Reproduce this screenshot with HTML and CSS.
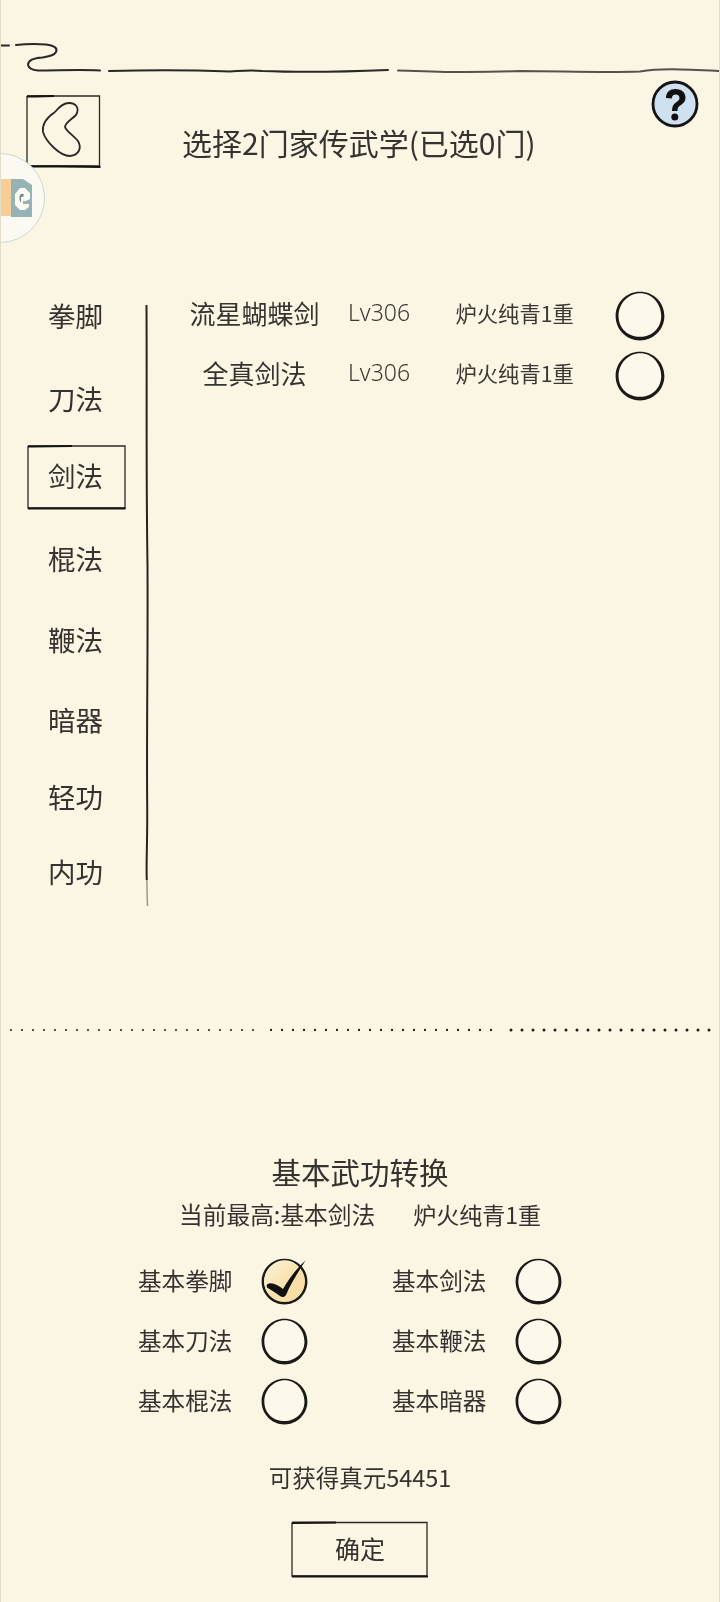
FILE: index.html
```html
<!DOCTYPE html>
<html lang="zh">
<head>
<meta charset="utf-8">
<title>选择家传武学</title>
<link rel="stylesheet" href="styles.css">
</head>
<body>
<svg class="defs" width="0" height="0" aria-hidden="true">
  <defs>
    <linearGradient id="gold" x1="0" y1="0" x2="1" y2="1">
      <stop offset="0" stop-color="#fcf3dc"/>
      <stop offset=".55" stop-color="#f9e0aa"/>
      <stop offset="1" stop-color="#f8dba0"/>
    </linearGradient>
    <symbol id="ring" viewBox="0 0 48 48">
      <circle cx="24" cy="24" r="22.500" fill="#fcf8ec"/>
      <path fill="#1c1a17" fill-rule="evenodd" d="M24 .8C37 .8 47.400 11 47.400 24S37 47.400 24 47.400.6 37 .6 24 11 .8 24 .8ZM24.200 2.200C12.800 2.200 3.400 12 3.400 24S12.500 44 24 44 44.400 35.500 44.400 24 35.600 2.200 24.200 2.200Z"/>
    </symbol>
  </defs>
</svg>
<div class="page">
  <svg class="top-rule" viewBox="0 0 720 40" aria-hidden="true">
    <path class="ink" d="M0 5.500H9"/>
    <path class="ink" d="M16 5C26 4 38 4 46 4.500C54 5.500 58 8 56 12C54 16 48 16.500 42 17.500C34 18 28 20 28 25C29 29 33 30 38 30.500C58 30.500 80 29.500 100 30.500"/>
    <path class="ink" d="M109 31C150 30 190 30 230 31.500C240 31 250 29.500 262 31C300 32.500 340 32 388 30"/>
    <path class="ink ink-soft" d="M398 30.500C440 32 470 33 520 31C560 31 600 33 640 31.500C660 28 680 29 720 31"/>
  </svg>

  <header class="head">
    <button class="back" type="button" aria-label="返回">
      <svg viewBox="0 0 76 74" aria-hidden="true">
        <path class="box-thin" d="M1 2V72H73.500V2H1"/>
        <path class="box-bold" d="M1 2.500C10 2.300 18 2.200 28 2M1 72.500C25 72.500 50 72 74.500 73"/>
        <path class="back-glyph" d="M29 18C20 24 16 31 17 38C20 48 34 62 44 62C53 61 56 54 52 47C47 41 40 37 39 33C39 29 45 26 50 21C54 14 50 9 43 9C37 9 33 13 29 18"/>
      </svg>
    </button>
    <h1 class="title">选择2门家传武学(已选0门)</h1>
    <svg class="help" viewBox="0 0 48 48" role="img" aria-label="帮助">
      <circle cx="24" cy="24" r="22" fill="#cfe1ee" stroke="#141414" stroke-width="2.800"/>
      <path d="M15 18C15 12 19 9 24.500 9C31 9 34.500 13 34.500 17.500C34.500 22 31.500 24 28.500 26C26.800 27.200 26.500 28.500 26.500 31H21C21 27 22 24.500 25 22.500C27.500 20.800 28.500 19.800 28.500 18C28.500 15.800 27 14.500 24.800 14.500C22.300 14.500 21 16 20.800 18.500Z" fill="#111"/>
      <circle cx="23.800" cy="37" r="3.500" fill="#111"/>
    </svg>
  </header>

  <aside class="bubble" aria-hidden="true">
    <svg class="bubble-logo" viewBox="0 0 32 40">
      <rect x="0" y="0" width="11" height="37" fill="#f6cf96"/>
      <path d="M10 0H22L31 6V38H10Z" fill="#93b3b5"/>
      <path d="M14 15L19 9H24L29 14V20L25 22H22V25H28V28L24 31H19L14 26Z" fill="#fbf9f2"/>
      <path d="M20 15H23L22 18H20V24L18.500 21V17Z" fill="#6f8f92"/>
    </svg>
  </aside>

  <main class="picker">
    <nav class="tabs">
      <div class="tab"><span>拳脚</span></div>
      <div class="tab"><span>刀法</span></div>
      <div class="tab tab-on">
        <svg class="tab-box" viewBox="0 0 100 66" preserveAspectRatio="none" aria-hidden="true">
          <path class="box-thin" d="M1 2V64H98V2H1"/>
          <path class="box-bold" d="M1 2.500C15 2.200 30 2.100 45 2M1 64.500H98.500"/>
        </svg>
        <span>剑法</span>
      </div>
      <div class="tab"><span>棍法</span></div>
      <div class="tab"><span>鞭法</span></div>
      <div class="tab"><span>暗器</span></div>
      <div class="tab"><span>轻功</span></div>
      <div class="tab"><span>内功</span></div>
    </nav>
    <svg class="divider" viewBox="0 0 8 602" aria-hidden="true">
      <path class="div-line" d="M3.500 0C4 100 3 160 4.500 260C5 360 3.500 420 4.200 500C4.500 540 3 560 3.800 575"/>
      <path class="div-tail" d="M3.800 575C4 585 4.200 592 4.500 601"/>
    </svg>
    <section class="skills">
      <div class="skill">
        <span class="skill-name">流星蝴蝶剑</span>
        <span class="skill-lv">Lv306</span>
        <span class="skill-rank">炉火纯青1重</span>
        <svg class="ring-lg"><use href="#ring"/></svg>
      </div>
      <div class="skill">
        <span class="skill-name">全真剑法</span>
        <span class="skill-lv">Lv306</span>
        <span class="skill-rank">炉火纯青1重</span>
        <svg class="ring-lg"><use href="#ring"/></svg>
      </div>
    </section>
  </main>

  <svg class="dots" viewBox="0 0 720 6" aria-hidden="true">
    <path class="dot-a" d="M11 3H260"/>
    <path class="dot-b" d="M271 3H500"/>
    <path class="dot-c" d="M511 3H710"/>
  </svg>

  <section class="convert">
    <h2 class="convert-title">基本武功转换</h2>
    <p class="convert-sub"><span>当前最高:基本剑法</span><span class="convert-rank">炉火纯青1重</span></p>
    <div class="options">
      <div class="option">
        <span class="option-label">基本拳脚</span>
        <span class="check">
          <svg class="ring-md"><use href="#ring"/></svg>
          <svg class="check-mark" viewBox="0 0 60 60" aria-hidden="true">
            <circle cx="26.500" cy="31.500" r="20.500" fill="url(#gold)"/>
            <path fill="#111" d="M9.500 34C14 32 20 35 25 39C31 29 38 19 47.500 10.500C41 21 33 33 28 45C26 47.500 24 47.500 22 46C18 43 13 40 9 37.500C8.500 36 8.500 35 9.500 34Z"/>
          </svg>
        </span>
      </div>
      <div class="option"><span class="option-label">基本剑法</span><svg class="ring-md"><use href="#ring"/></svg></div>
      <div class="option"><span class="option-label">基本刀法</span><svg class="ring-md"><use href="#ring"/></svg></div>
      <div class="option"><span class="option-label">基本鞭法</span><svg class="ring-md"><use href="#ring"/></svg></div>
      <div class="option"><span class="option-label">基本棍法</span><svg class="ring-md"><use href="#ring"/></svg></div>
      <div class="option"><span class="option-label">基本暗器</span><svg class="ring-md"><use href="#ring"/></svg></div>
    </div>
    <p class="gain">可获得真元54451</p>
    <button class="confirm" type="button">
      <svg class="confirm-box" viewBox="0 0 138 57" preserveAspectRatio="none" aria-hidden="true">
        <path class="box-thin" d="M1 1.500V55H136V1.500H1"/>
        <path class="box-bold" d="M1 1.800C15 1.600 30 1.500 45 1.500M1 55.500H137"/>
      </svg>
      <span>确定</span>
    </button>
  </section>
</div>
</body>
</html>
```

FILE: styles.css
```css
* { box-sizing: border-box; }
html, body { margin: 0; padding: 0; }
body {
  width: 720px;
  height: 1602px;
  overflow: hidden;
  background: #fbf5e4;
  color: #35332f;
  font-family: "Noto Sans CJK SC", "Noto Sans", sans-serif;
  font-weight: 400;
}
.defs { position: absolute; }
.page {
  position: relative;
  width: 720px;
  height: 1602px;
  border-left: 1px solid #e4dcc6;
  border-right: 1px solid #e4dcc6;
  overflow: hidden;
  filter: blur(.35px);
}
svg { display: block; overflow: visible; }
.ink { fill: none; stroke: #2a2825; stroke-width: 2; stroke-linecap: round; stroke-linejoin: round; }
.ink-soft { stroke: #55524c; }
.box-thin { fill: none; stroke: #2a2825; stroke-width: 1.300; }
.box-bold { fill: none; stroke: #151412; stroke-width: 2.200; }

.top-rule { width: 720px; height: 40px; margin: 40px 0 0 -1px; }

.head {
  display: grid;
  grid-template-columns: 99px 1fr 48px;
  align-items: start;
  height: 93px;
  padding: 0 20px 0 25px;
}
.back {
  width: 76px;
  height: 74px;
  margin-top: 14px;
  padding: 0;
  border: 0;
  background: none;
}
.back svg { width: 76px; height: 74px; }
.back-glyph { fill: none; stroke: #2a2825; stroke-width: 1.800; stroke-linejoin: round; }
.title {
  margin: 42px 0 0;
  padding-left: 57px;
  font-size: 30px;
  line-height: 40px;
  font-weight: 400;
  white-space: nowrap;
}
.help { width: 48px; height: 48px; }

.bubble {
  position: absolute;
  left: -46px;
  top: 153px;
  width: 90px;
  height: 90px;
  border-radius: 50%;
  background: #fbf9f2;
  border: 1.500px solid #c9d8d2;
}
.bubble-logo {
  position: absolute;
  left: 45px;
  top: 25px;
  width: 32px;
  height: 40px;
}

.picker {
  display: flex;
  align-items: flex-start;
  height: 744px;
  margin-top: 111px;
}
.tabs { width: 142px; padding-left: 26px; flex: none; }
.tab {
  position: relative;
  display: flex;
  align-items: center;
  justify-content: center;
  width: 100px;
  height: 66px;
  font-size: 27.500px;
  line-height: 62px;
}
.tab + .tab { margin-top: 11px; }
.tab:nth-child(2) { margin-top: 17px; }
.tab:nth-child(4) { margin-top: 17px; }
.tab:nth-child(5) { margin-top: 15px; }
.tab:nth-child(6) { margin-top: 14px; }
.tab:nth-child(8) { margin-top: 9px; }
.tab span { position: relative; padding: 0 3px 4px 0; }
.tab-box { position: absolute; inset: 0; width: 100px; height: 66px; }

.divider { width: 8px; height: 602px; flex: none; margin-top: 21px; }
.div-line { fill: none; stroke: #262421; stroke-width: 2; }
.div-tail { fill: none; stroke: #9b978d; stroke-width: 1.500; }

.skills { margin-left: 13px; padding-top: 2px; }
.skill {
  display: grid;
  grid-template-columns: 184px 107.500px 159px 50px;
  align-items: center;
  height: 60px;
}
.skill span { padding-bottom: 8px; }
.skill-name { font-size: 26px; padding-right: 3px; text-align: center; white-space: nowrap; }
.skill-lv { font-size: 23px; color: #3a3833; font-family: "Noto Sans", sans-serif; font-weight: 300; }
.skill-rank { font-size: 21.300px; white-space: nowrap; color: #3a3833; }
.ring-lg { width: 50px; height: 50px; }

.dots { width: 720px; height: 6px; margin: -1px 0 0 -1px; }
.dot-a, .dot-b, .dot-c { fill: none; stroke: #1f1d1b; stroke-linecap: round; stroke-dasharray: 0 11; }
.dot-a { stroke-width: 2; }
.dot-b { stroke-width: 2.300; }
.dot-c { stroke-width: 3; }

.convert {
  display: flex;
  flex-direction: column;
  align-items: center;
  padding-top: 117px;
}
.convert-title {
  margin: 0;
  font-size: 29.500px;
  line-height: 42px;
  font-weight: 400;
}
.convert-sub {
  display: flex;
  align-items: center;
  gap: 38px;
  margin: 1px 0 0;
  font-size: 23.700px;
  line-height: 42px;
  white-space: nowrap;
}
.convert-rank { font-size: 23px; }
.options {
  display: grid;
  grid-template-columns: 254px 170px;
  align-self: flex-start;
  margin: 23px 0 0 137px;
  row-gap: 13px;
  font-size: 23.600px;
}
.option {
  display: flex;
  align-items: center;
  gap: 28.600px;
  height: 47px;
  white-space: nowrap;
}
.option-label { padding-bottom: 4px; }
.ring-md { width: 47px; height: 47px; }
.check { position: relative; display: block; width: 47px; height: 47px; }
.check-mark { position: absolute; left: -3px; top: -8px; width: 60px; height: 60px; }
.gain { margin: 35px 0 0; font-size: 23.500px; line-height: 34px; white-space: nowrap; }
.confirm {
  position: relative;
  display: flex;
  align-items: center;
  justify-content: center;
  width: 138px;
  height: 57px;
  margin-top: 27px;
  padding: 0;
  border: 0;
  background: none;
  color: inherit;
  font: inherit;
  font-size: 25px;
}
.confirm span { position: relative; padding-bottom: 3px; }
.confirm-box { position: absolute; inset: 0; width: 138px; height: 57px; }
```
